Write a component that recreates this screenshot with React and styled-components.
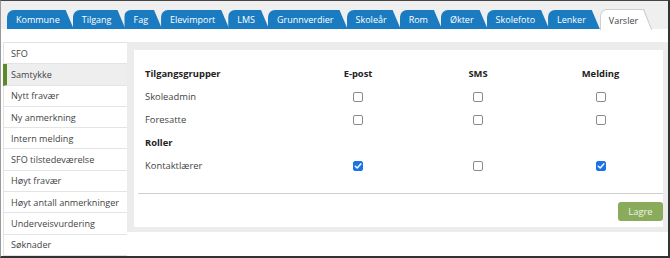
import React from 'react';
import styled, { createGlobalStyle } from 'styled-components';

const GlobalStyle = createGlobalStyle`
  * { box-sizing: border-box; }
  body {
    margin: 0;
    font-family: 'Open Sans', 'DejaVu Sans', sans-serif;
    background: #fff;
  }
`;

const Frame = styled.div`
  width: 670px;
  height: 258px;
  overflow: hidden;
  border-top: 1px solid #444;
  border-right: 2px solid #333;
  border-bottom: 2px solid #333;
  border-left: 1px solid #999;
  display: flex;
  flex-direction: column;
  background: #fff;
`;

const TabBar = styled.div`
  height: 28px;
  background: #efefef;
  display: flex;
  align-items: flex-end;
  padding-left: 6px;
`;

const tabShape = `polygon(0 100%, 0 0, calc(100% - 8px) 0, 100% 100%)`;

const Tab = styled.div`
  height: 19px;
  display: flex;
  align-items: center;
  padding: 0 14px 0 9px;
  margin-right: -1px;
  background: #1b7bc0;
  color: #fff;
  font-size: 9px;
  border-top-left-radius: 7px;
  clip-path: ${tabShape};
  white-space: nowrap;
`;

const ActiveTabOuter = styled.div`
  height: 21px;
  margin-bottom: -1px;
  margin-left: 1px;
  padding: 1px 1px 0 1px;
  background: #cfcfcf;
  border-top-left-radius: 7px;
  clip-path: ${tabShape};
`;

const ActiveTabInner = styled.div`
  height: 100%;
  display: flex;
  align-items: center;
  padding: 0 13px 0 8px;
  background: #fff;
  color: #444;
  font-size: 9px;
  border-top-left-radius: 6px;
  clip-path: ${tabShape};
`;

const Body = styled.div`
  flex: 1;
  display: flex;
  align-items: flex-start;
  padding: 13px 0 0 2px;
`;

const Sidebar = styled.div`
  width: 124px;
  flex-shrink: 0;
  border-top: 1px solid #e2e2e2;
  border-left: 1px solid #e2e2e2;
`;

const SideItem = styled.div`
  height: 21.3px;
  display: flex;
  align-items: center;
  padding-left: ${p => (p.$active ? '4px' : '7px')};
  border-bottom: 1px solid #e4e4e4;
  border-left: ${p => (p.$active ? '4px solid #5b8a2a' : 'none')};
  margin-left: ${p => (p.$active ? '-1px' : '0')};
  background: ${p => (p.$active ? '#eeeeee' : '#fff')};
  color: #444;
  font-size: 9.1px;
  white-space: nowrap;
`;

const Panel = styled.div`
  flex: 1;
  background: #ececec;
  padding: 8px 5px 5px 7px;
`;

const Card = styled.div`
  background: #fff;
  padding: 12px 0 6px 4px;
`;

const Grid = styled.div`
  display: grid;
  grid-template-columns: 153px 120px 120px 125px;
  grid-auto-rows: 23px;
  padding-left: 7px;
  align-items: center;
`;

const Cell = styled.div`
  font-size: 9.4px;
  font-weight: ${p => (p.$bold ? 700 : 400)};
  color: ${p => (p.$bold ? '#222' : '#444')};
  display: flex;
  justify-content: ${p => (p.$center ? 'center' : 'flex-start')};
`;

const Box = styled.span`
  width: 10px;
  height: 10px;
  border-radius: 2px;
  border: 1px solid ${p => (p.$checked ? '#1a73e8' : '#8a8a8a')};
  background: ${p => (p.$checked ? '#1a73e8' : '#fff')};
  display: inline-flex;
  align-items: center;
  justify-content: center;
`;

const Divider = styled.div`
  height: 1px;
  background: #cfcfcf;
  margin-top: 16px;
`;

const Footer = styled.div`
  display: flex;
  justify-content: flex-end;
  padding-top: 8px;
`;

const SaveButton = styled.button`
  width: 45px;
  height: 19px;
  border: none;
  border-radius: 3px;
  background: #8aab5c;
  color: #eef5e4;
  font-family: 'Open Sans', sans-serif;
  font-size: 9.4px;
  padding: 0;
`;

const Check = ({ checked }) => (
  <Box $checked={checked}>
    {checked && (
      <svg width="8" height="8" viewBox="0 0 8 8">
        <path d="M1.3 4.2 L3.2 6 L6.8 1.9" fill="none" stroke="#fff" strokeWidth="1.5" strokeLinecap="round" strokeLinejoin="round" />
      </svg>
    )}
  </Box>
);

const tabs = ['Kommune', 'Tilgang', 'Fag', 'Elevimport', 'LMS', 'Grunnverdier', 'Skoleår', 'Rom', 'Økter', 'Skolefoto', 'Lenker'];

const menu = ['SFO', 'Samtykke', 'Nytt fravær', 'Ny anmerkning', 'Intern melding', 'SFO tilstedeværelse', 'Høyt fravær', 'Høyt antall anmerkninger', 'Underveisvurdering', 'Søknader'];

const rows = [
  { label: 'Tilgangsgrupper', header: true },
  { label: 'Skoleadmin', values: [false, false, false] },
  { label: 'Foresatte', values: [false, false, false] },
  { label: 'Roller', group: true },
  { label: 'Kontaktlærer', values: [true, false, true] },
];

const App = () => {
  return (
    <>
      <GlobalStyle />
      <Frame>
        <TabBar>
          {tabs.map(t => <Tab key={t}>{t}</Tab>)}
          <ActiveTabOuter>
            <ActiveTabInner>Varsler</ActiveTabInner>
          </ActiveTabOuter>
        </TabBar>
        <Body>
          <Sidebar>
            {menu.map(m => (
              <SideItem key={m} $active={m === 'Samtykke'}>{m}</SideItem>
            ))}
          </Sidebar>
          <Panel>
            <Card>
              <Grid>
                {rows.map(r => {
                  if (r.header) {
                    return (
                      <React.Fragment key={r.label}>
                        <Cell $bold>{r.label}</Cell>
                        <Cell $bold $center>E-post</Cell>
                        <Cell $bold $center>SMS</Cell>
                        <Cell $bold $center>Melding</Cell>
                      </React.Fragment>
                    );
                  }
                  if (r.group) {
                    return (
                      <React.Fragment key={r.label}>
                        <Cell $bold>{r.label}</Cell>
                        <Cell />
                        <Cell />
                        <Cell />
                      </React.Fragment>
                    );
                  }
                  return (
                    <React.Fragment key={r.label}>
                      <Cell>{r.label}</Cell>
                      {r.values.map((v, i) => (
                        <Cell key={i} $center><Check checked={v} /></Cell>
                      ))}
                    </React.Fragment>
                  );
                })}
              </Grid>
              <Divider />
              <Footer>
                <SaveButton>Lagre</SaveButton>
              </Footer>
            </Card>
          </Panel>
        </Body>
      </Frame>
    </>
  );
};

export default App;
